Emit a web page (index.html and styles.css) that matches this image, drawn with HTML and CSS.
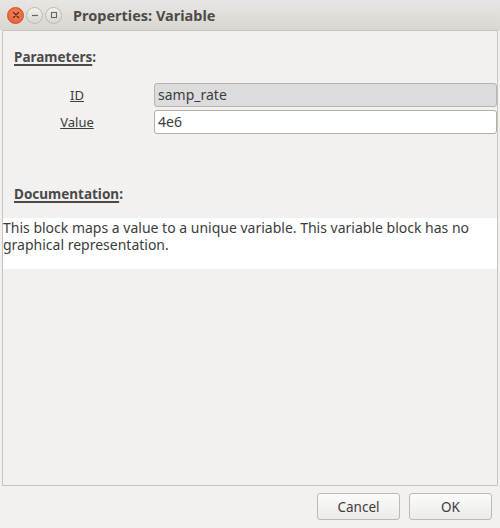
FILE: index.html
```html
<!DOCTYPE html>
<html>
<head>
<meta charset="utf-8">
<link rel="stylesheet" href="styles.css">
</head>
<body>
<div class="window">
  <div class="titlebar">
    <div class="wbtns">
      <span class="wbtn close"><svg width="8" height="8" viewBox="0 0 8 8"><path d="M1.5 1.5 L6.5 6.5 M6.5 1.5 L1.5 6.5" stroke="#5a2a15" stroke-width="1.3" stroke-linecap="round"/></svg></span>
      <span class="wbtn"><svg width="8" height="8" viewBox="0 0 8 8"><path d="M1 4.5 H7" stroke="#6b6862" stroke-width="1.2"/></svg></span>
      <span class="wbtn"><svg width="8" height="8" viewBox="0 0 8 8"><rect x="1.5" y="1.5" width="5" height="5" fill="none" stroke="#6b6862" stroke-width="1.1"/></svg></span>
    </div>
    <div class="title">Properties: Variable</div>
  </div>
  <div class="frame">
    <div class="section-head"><u>Parameters</u>:</div>
    <div class="params">
      <div class="row">
        <div class="label"><u>ID</u></div>
        <div class="field readonly">samp_rate</div>
      </div>
      <div class="row">
        <div class="label"><u>Value</u></div>
        <div class="field">4e6</div>
      </div>
    </div>
    <div class="section-head doc-head"><u>Documentation</u>:</div>
    <div class="doc">This block maps a value to a unique variable. This variable block has no graphical representation.</div>
  </div>
  <div class="actions">
    <button class="btn">Cancel</button>
    <button class="btn">OK</button>
  </div>
</div>
</body>
</html>
```
FILE: styles.css
```css
html, body {
  margin: 0;
  padding: 0;
  background: #f2f1f0;
}
body {
  font-family: "Noto Sans", "DejaVu Sans", sans-serif;
  font-size: 13px;
  color: #3c3c3c;
}
.window {
  width: 500px;
  height: 528px;
  display: flex;
  flex-direction: column;
  background: #f2f1f0;
}
.titlebar {
  height: 30px;
  box-sizing: border-box;
  background: linear-gradient(#e8e6e3, #dad7d2);
  display: flex;
  align-items: center;
  padding-left: 7px;
}
.wbtns {
  display: flex;
  gap: 2px;
}
.wbtn {
  width: 17px;
  height: 17px;
  border-radius: 50%;
  box-sizing: border-box;
  border: 1px solid #bcb8b1;
  background: linear-gradient(#f3f2f0, #d9d6d1);
  display: flex;
  align-items: center;
  justify-content: center;
}
.wbtn.close {
  border-color: #c8512a;
  background: radial-gradient(circle at 50% 40%, #f6865d, #e2582b);
}
.title {
  margin-left: 11px;
  font-weight: bold;
  font-size: 14.5px;
  color: #4d4b47;
}
.frame {
  margin: 0 2px 0 2px;
  height: 456px;
  box-sizing: border-box;
  border: 1px solid #c9c4bd;
  border-top-color: #c7c2bb;
  display: flex;
  flex-direction: column;
}
.section-head {
  font-weight: bold;
  font-size: 13.5px;
  color: #4a4a4a;
  padding-left: 11px;
  margin-top: 17px;
}
.section-head u {
  text-decoration-thickness: 2px;
  text-underline-offset: 2px;
}
.params {
  margin-top: 17px;
  display: flex;
  flex-direction: column;
  gap: 3px;
}
.row {
  display: flex;
  align-items: center;
}
.label {
  width: 148px;
  text-align: center;
  color: #3c3c3c;
}
.field {
  margin-left: 3px;
  flex: 1;
  height: 24px;
  box-sizing: border-box;
  border: 1px solid #b7ada3;
  border-radius: 3px;
  background: #fff;
  padding-left: 3px;
  line-height: 22px;
  font-size: 14px;
}
.field.readonly {
  background: #dcdcdc;
  border-color: #b9b3ad;
}
.doc-head {
  margin-top: 51px;
}
.doc {
  margin-top: 15px;
  background: #fff;
  height: 50px;
  padding: 1px 0 0 0;
  line-height: 17px;
  font-size: 14px;
  color: #3c3c3c;
}
.actions {
  display: flex;
  justify-content: flex-end;
  gap: 9px;
  padding: 7px 8px 0 0;
}
.btn {
  width: 83px;
  height: 27px;
  font-family: inherit;
  font-size: 13.5px;
  color: #3c3c3c;
  border: 1px solid #c0b9b2;
  border-radius: 3px;
  background: linear-gradient(#fbfbfa, #ecebe9);
}
```
